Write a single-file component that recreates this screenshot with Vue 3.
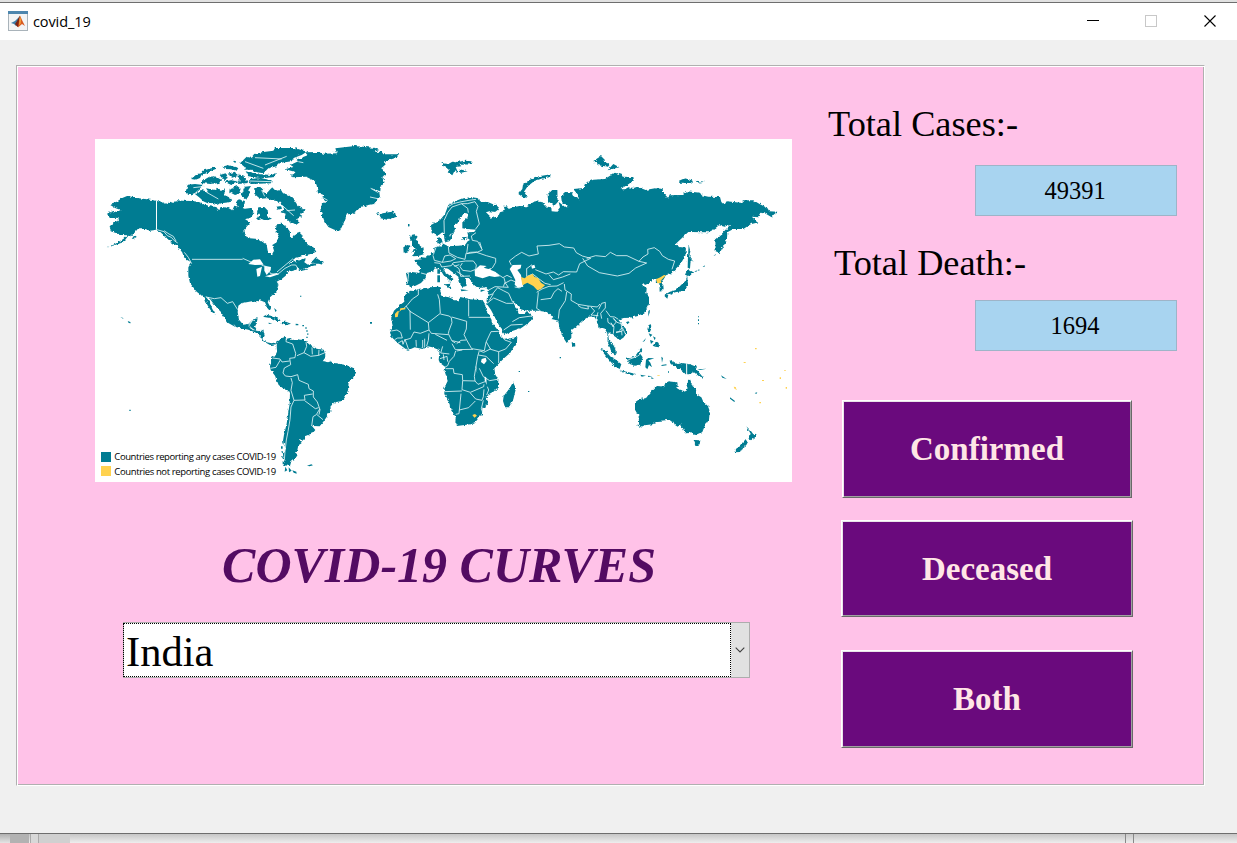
<script setup>
import { ref } from 'vue'

const country = ref('India')
const totals = [
  { label: 'Total Cases:-', value: '49391', cls: 'cases' },
  { label: 'Total Death:-', value: '1694', cls: 'death' },
]
const actions = ['Confirmed', 'Deceased', 'Both']
</script>

<template>
  <div class="desktop">
    <div class="window">
      <header class="titlebar">
        <svg class="appicon" width="20" height="20" viewBox="0 0 20 20">
          <rect x=".5" y=".5" width="19" height="19" fill="#f3f4f5" stroke="#a9b3ba" />
          <rect x="0" y="0" width="20" height="3" fill="#4d86ae" />
          <path d="M3 12 7 10 9 8 12 5 10 13 8 15 6 13Z" fill="#3d7ea9" />
          <path d="M7 13 9 10 12 4.500 11 15 9.500 16Z" fill="#7c2415" />
          <path d="M12 4.500 14 9 17 15 14 13 10 16.500 11 10Z" fill="#d95a20" />
          <path d="M12 5 13 9 12.500 13 11 14Z" fill="#f2a33a" />
        </svg>
        <span class="caption">covid_19</span>
        <svg class="controls" width="130" height="14" viewBox="0 0 130 14" shape-rendering="crispEdges">
          <path d="M0 6.500H12" stroke="#000" />
          <rect x="58.500" y="1.500" width="11" height="11" fill="none" stroke="#c8c8c8" />
          <path d="M117.500 1.500 128.500 12.500M128.500 1.500 117.500 12.500" stroke="#000" stroke-width="1.100" shape-rendering="auto" />
        </svg>
      </header>

      <main class="client">
        <section class="panel">
          <div class="left">
            <svg class="map" width="697" height="343" viewBox="0 0 697 343">
              <defs>
                <filter id="coast" x="-2%" y="-2%" width="104%" height="104%" color-interpolation-filters="sRGB">
                  <feTurbulence type="fractalNoise" baseFrequency=".11" numOctaves="2" seed="4" result="n" />
                  <feDisplacementMap in="SourceGraphic" in2="n" scale="10" xChannelSelector="R" yChannelSelector="G" />
                </filter>
              </defs>
              <rect width="697" height="343" fill="#fff" />

              <!-- North America -->
              <g transform="scale(.33333)">
                <g class="rough">
                <path class="land" d="M35 327 60 315 85 300 97 289 80 288 65 283 47 277 44 262 60 248 72 245 70 236 45 238 36 224 55 216 65 219 77 213 62 208 42 196 65 188 80 178 98 170 120 176 150 180 185 185 200 188 215 195 225 188 235 192 242 184 262 185 290 186 310 188 325 195 345 202 365 205 372 217 377 203 400 207 412 214 418 200 435 205 450 209 467 207 478 222 465 238 450 241 466 250 445 275 450 290 465 298 490 300 515 317 518 335 530 348 537 335 532 318 545 310 551 290 542 275 545 256 560 254 575 264 585 278 585 290 595 295 603 283 615 278 622 292 628 305 640 318 655 325 664 338 650 344 625 350 600 358 578 378 600 366 620 362 632 357 628 370 640 378 655 372 665 378 640 384 615 393 608 388 595 395 580 398 572 410 560 420 545 428 552 437 550 450 542 460 525 475 518 490 528 508 524 515 517 507 510 490 495 484 486 490 470 487 455 490 440 492 430 500 428 520 432 542 445 557 460 555 470 545 473 541 488 538 485 552 480 563 488 577 505 574 509 590 503 600 515 610 530 613 546 609 545 616 525 618 505 607 495 590 480 580 460 572 435 567 420 563 400 552 388 535 375 515 360 500 345 480 332 472 345 490 352 510 362 527 350 518 337 498 330 480 318 468 305 458 297 448 285 432 280 410 280 385 288 372 280 360 265 350 263 342 258 335 248 320 230 312 224 302 212 297 205 287 195 278 180 273 165 275 145 268 130 268 120 280 108 292 100 290 85 310 60 318Z" />
                <path class="land" d="M650 368 664 353 668 360 681 367 683 377 672 374 660 374ZM110 298l12-8 3 4-11 6ZM610 392l25-3 6 2-27 6ZM261 340l18 15 9 14-13-7Z" />
                <!-- Arctic islands -->
                <path class="land" d="M278 137 300 135 325 138 313 150 300 162 284 168 272 159ZM300 165 318 153 340 158 333 148 360 153 365 146 378 156 390 148 388 168 412 179 403 190 378 193 370 198 355 192 338 193 325 187 315 177ZM288 120 306 105 320 102 327 94 360 85 362 90 348 96 340 101 320 107 315 117 302 122ZM325 124 343 113 360 112 381 124 372 132 347 135 318 132ZM382 83 400 78 430 87 425 95 407 91 390 90ZM398 104 420 98 428 111 411 116ZM374 108l18-5 6 14-12 7ZM388 128l22-5 21 6-22 9ZM404 149l23-8 10 8-5 15-12 4-17-9ZM435 73 455 53 470 57 480 45 500 40 535 35 540 27 600 27 635 38 620 48 596 57 590 67 555 72 545 82 520 88 505 103 486 100 472 92 455 93 448 83ZM452 96 486 105 530 108 542 102 540 114 500 118 460 112ZM463 120 495 117 530 124 528 133 468 135 460 130ZM431 107 445 109 459 132 430 135ZM450 143 468 141 460 154 464 166 453 183 438 171ZM414 66l9-1-2 8ZM478 150 490 143 505 149 500 158 515 163 530 146 548 155 558 153 564 163 580 167 595 180 605 194 607 201 632 214 614 225 622 231 606 240 614 250 604 257 581 245 568 240 572 224 560 220 567 208 554 188 529 184 518 178 495 179 478 164ZM490 205 508 204 519 215 515 231 531 239 515 244 500 237 484 243 494 229 486 220ZM544 203l14-2 3 8-12 3ZM432 181l18 5-3 18-15 4-12-19Z" />
                </g>
                <path class="water" d="M460 375 475 362 495 361 506 377 480 378ZM484 390 501 383 495 411 487 413ZM508 380 528 384 527 394 515 408 508 395ZM510 412 545 402 552 406 525 415Z" />
                <path class="edge" d="M184.500 185V271" />
                <path class="fine" d="M291 361H443M443 358 468 369M500 379 515 383 527 404 548 406 570 388 590 378 602 378 610 390M333 474 358 479 378 476 397 493 413 488 428 512M182 271 207 278 217 290 229 295 238 305 248 312M546 399 570 379 593 360 604 370M550 430v15M462 556l10-11M207 275 222 285 235 292 243 306M268 340 280 355 290 374" />
                <path class="fine" d="M295 146 330 142M335 160 370 180M450 68 505 88M480 56 560 60M510 78 575 52M463 126 530 128M560 198 596 230M410 123 438 126M575 215 600 213M500 153 509 172" />
              </g>

              <!-- Greenland, Iceland -->
              <g transform="translate(145 0) scale(.33333)">
                <path class="land rough" d="M135 91 160 84 152 77 175 67 168 62 203 49 195 40 240 39 250 44 291 43 286 28 345 21 400 26 418 33 400 39 425 38 430 46 479 46 469 56 436 66 435 78 424 88 431 94 438 108 427 116 434 130 422 144 421 157 392 147 418 161 420 173 412 181 402 195 362 203 348 219 320 227 312 250 300 275 283 272 265 264 253 246 241 213 246 195 259 188 245 178 250 169 234 163 230 139 224 126 198 113 158 115 153 107 170 100ZM407 222 418 219 417 229 428 223 455 218 466 223 468 234 444 243 419 237 424 232Z" />
                <path class="land" d="M504 256h4v6h-4ZM102 507l8 7-3 6ZM119 517l7 7ZM128 530l5 5ZM180 470h4v3h-4Z" />
                <path class="fine" d="M245 174 263 184M392 148 415 161M390 174 413 179M175 68 190 71M424 88 435 87M290 41 276 37" />
              </g>

              <!-- Europe and Asia -->
              <g transform="translate(285 0) scale(.33333)">
                <g class="rough">
                <path class="land" d="M78 402 96 399 118 402 121 385 113 378 103 363 122 361 124 355 137 356 150 346 162 338 163 326 175 322 190 323 187 313 205 322 218 321 235 320 255 318 263 307 270 303 263 298 247 302 246 295 265 293 262 280 282 279 289 272 260 270 247 268 247 250 262 236 266 224 255 222 240 235 237 247 228 253 222 262 225 272 215 287 216 296 208 307 198 309 193 300 192 285 187 280 172 291 155 282 153 258 180 243 195 225 205 198 225 187 248 178 275 175 297 178 300 187 325 190 350 200 357 212 348 219 328 217 318 220 332 233 330 240 343 235 354 233 360 220 375 215 371 201 380 199 386 210 400 205 418 201 440 202 465 187 488 190 500 203 514 205 515 217 530 218 540 205 536 189 543 194 556 205 568 204 552 192 545 185 543 170 555 159 575 160 581 172 596 181 595 168 585 157 580 150 612 147 615 133 640 122 675 120 690 110 705 101 725 107 728 113 760 114 762 124 742 138 720 151 735 151 745 145 761 147 772 143 797 153 825 148 848 150 850 162 864 176 870 169 905 168 920 157 960 161 965 169 985 173 1020 174 1024 189 1033 198 1040 187 1088 192 1088 184 1120 184 1140 196 1162 207 1168 217 1192 218 1180 228 1175 235 1160 226 1144 221 1137 235 1115 233 1136 250 1112 256 1090 270 1060 270 1042 280 1041 299 1034 315 1019 342 1004 335 1003 303 1025 285 1042 266 1054 254 1034 263 1017 259 1000 272 985 280 925 279 886 316 898 324 918 326 916 350 902 374 875 402 861 405 843 433 850 438 851 453 839 455 838 433 827 430 830 419 815 423 808 432 795 438 788 430 799 423 786 437 800 447 799 462 807 471 807 495 794 520 774 531 750 536 731 537 715 542 725 555 738 570 738 585 730 596 719 603 708 592 690 580 684 586 687 604 700 618 707 631 707 648 696 639 683 610 682 582 673 568 656 568 650 545 642 532 625 533 605 547 588 563 574 574 574 597 560 612 549 595 538 565 535 545 515 540 520 533 500 519 475 515 440 515 421 511 413 499 397 487 411 511 418 525 434 525 442 518 457 532 459 538 445 552 425 566 395 577 372 588 366 570 357 559 333 513 319 493 321 475 327 452 319 444 302 447 280 439 276 427 266 419 275 414 262 417 257 423 260 441 246 443 236 429 235 413 220 401 204 389 192 386 190 396 213 412 222 422 218 419 210 433 209 423 191 409 180 391 165 387 158 398 141 401 137 417 123 432 105 441 95 444 78 439 82 424Z" />
                <path class="land" d="M93 288 104 286 113 293 107 302 115 307 120 320 132 329 128 339 133 345 115 351 95 352 105 341 97 337 108 330 96 320 96 307 89 299ZM70 325 82 318 92 321 84 329 87 336 71 341ZM195 436 212 434 210 448 195 441ZM171 297l12-3 5 16-7 7-9-4Z" />
                <path class="land" d="M184 72 205 75 217 68 235 71 244 82 227 84 232 96 222 99 217 109 203 100 209 91 192 83ZM227 70 250 65 278 67 275 76 247 77ZM239 91l24 6-22 5ZM415 165 427 150 429 137 447 124 465 114 512 106 511 114 482 120 463 126 443 142 432 158 440 171 447 176 429 175ZM503 165 517 153 532 153 533 189 523 200 504 187ZM640 66 663 51 675 63 672 68 690 76 684 83 655 79ZM683 94l17-19 18 10ZM897 125 914 118 941 125 932 132 900 131ZM947 125l28 3-23 3Z" />
                <path class="land" d="M926 317 931 337 928 353 941 369 932 363 930 389 923 386 924 353ZM915 407 923 390 943 401 924 411ZM922 411 924 440 912 455 886 460 868 465 854 467 870 458 888 453 904 437 916 426Z" />
                </g>
                <path class="land" d="M172 391h8v13h-8ZM172 409h8v21h-8ZM242 451l24 3-22 3ZM302 452l14 1-14 6ZM84 255h4v7h-4ZM855 465l10 2-3 12-8-7ZM869 465l10-5-3 7ZM805 516l5-4-4 20ZM1000 352l7-7v3ZM943 398l7-4v4ZM952 394l6-3v4ZM968 384l6-5v4ZM740 548l9 1-6 6Z" />
                <path class="water" d="M285 411 284 393 300 379 320 381 311 386 325 390 337 386 331 392 347 399 360 412 344 414 328 411 308 418ZM389 390 398 378 424 377 422 388 412 393 423 408 424 415 427 429 430 443 414 446 404 437 406 423 396 403ZM454 380 463 377 466 386 456 389ZM208 289l6-6-4 11Z" />
                <path class="fine" d="M193 285 192 245 203 221 216 204 245 194 262 194 285 188 294 202 289 217 298 255 287 270M244 194 263 208 265 221M206 202 220 194 240 189 267 184 288 181M288 281 274 291 277 304 293 307 307 333 293 339 271 340 260 344 264 315M299 309 305 328M260 344 290 340 319 350 347 358 347 370 337 387M205 322 207 342 232 355 255 361 258 343M160 347 168 325M159 349 163 364 187 370 194 351 210 348 227 359 213 366 187 370M163 371 180 373 185 384 214 380 220 371 257 366 280 366 289 378 287 391 272 397 248 394 240 383 247 372M216 374 237 389 242 412 270 411M223 382 238 377M230 397 252 412M123 402 142 407M86 405 82 434M351 404 369 416 381 409 395 416M372 417 376 432 393 423 405 428M376 432 385 445 345 443 323 455M370 443 375 430M339 463 353 446 370 455 386 463 398 490M320 471 340 464 328 484M321 493 341 477 379 493 399 493M397 548 418 536 455 531M371 573 393 558 428 556M404 444 419 447 434 432M388 366 407 351 425 340 447 351 475 345 471 321 507 319 538 314 553 324 581 327 589 341 607 351 632 358M388 366 394 379M440 388 440 413 458 405 476 419 495 433 512 437M440 389 456 377M466 392 498 405 520 399 536 408 550 398 590 399 599 374 632 358M507 407 520 422 548 414 571 405M475 460 470 508 482 516M470 460 486 450 507 442 531 441 551 431M482 482 513 478 522 460 534 449 546 457M553 435 555 453 574 465 573 484 594 496 624 501 652 504 660 495M535 539 538 513 556 485 560 459M594 499 604 506 625 510 624 501M633 504 644 516 633 528 655 530M656 511 665 493 676 490 676 507 662 523 665 539M678 515 691 533 704 534 715 541M683 537 684 550 702 562 700 584M700 537 711 550 723 554 727 576 708 579M608 358 623 381 658 401 712 411 747 403 767 387 800 372 777 367 741 350 710 350 691 340 676 353 647 350 620 358M777 367 789 354 804 345 803 331 823 326 839 337 847 350 865 361 884 366 876 391M647 545 654 520" />
                <path class="yellow" d="M423 414 434 418 442 411 458 405 463 413 475 418 483 431 495 439 482 451 472 454 460 441 442 431 427 439ZM828 421 841 415 852 408 858 409 842 425 845 432 832 433Z" />
              </g>

              <!-- Africa -->
              <g transform="translate(280 141) scale(.33333)">
                <path class="land rough" d="M105 32 117 33 130 27 165 22 192 20 198 36 193 42 202 49 222 52 240 61 252 61 256 51 285 58 323 61 330 72 333 90 345 107 351 128 361 141 371 154 375 165 388 179 427 171 426 184 406 218 388 234 371 251 358 265 361 284 370 298 369 322 349 341 335 349 339 374 322 386 321 401 302 425 286 433 246 438 241 427 242 411 226 387 222 367 208 339 208 323 218 303 209 274 211 261 195 249 191 240 194 211 172 202 158 199 142 207 119 202 101 210 91 206 69 190 52 173 45 158 50 147 53 137 48 115 57 92 76 74 88 65 87 48ZM386 348 404 325 414 307 423 325 415 358 404 382 390 382 384 363ZM590 187 600 188 601 199 592 202Z" />
                <path class="land" d="M167 232h4v4h-4ZM431 273h4v3h-4ZM459 333h4v3h-4ZM554 231h4v4h-4ZM391 303l8 5Z" />
                <path class="water" d="M320 237 332 233 335 243 327 253 318 246ZM329 289l5 4 1 22-6-14ZM303 257l4 24-5-20Z" />
                <path class="fine" d="M130 29 130 45 112 57 98 74 88 84M105 92 106 149M93 78 105 94 160 128 196 100 193 59 188 43M281 59V109M281 112H345M196 102 222 108 229 113 231 128 222 152 220 161 231 183 241 189M160 128 162 150 136 160 117 156 107 175 90 180M230 111 275 124 274 147 267 164 275 180M162 150 169 160 220 164M49 153 66 150 77 157 82 174 68 174 59 179M68 190 82 182 84 193 90 178 95 192 101 209M123 180 124 200M143 180V204M149 176V202M162 160 160 181 155 198M275 180 290 206 328 212 333 187 348 155 371 154M334 186 347 208 371 215 392 207 409 187 389 180M371 215V249M348 206 326 217 315 213M245 191 258 181 273 180M203 199 197 219 223 222M231 191 241 209 294 208M242 213 237 229 223 244 218 257 211 261M195 236 216 229 218 245M205 223 207 240M212 266 235 266 237 280 262 284 263 302 300 303 298 289 302 265 308 229 313 212M310 225 333 229 356 251M313 265 325 290 344 302 367 298M300 303 309 313 330 305M263 303 261 329 286 337 326 320 327 313M208 335 261 333M286 339 302 357 321 361 325 350 327 328M258 341 252 401 242 403M253 390 281 383 301 363M325 361 319 386 323 397M337 320 341 330 335 345M232 182 256 188M181 163 216 181M245 213 262 210" />
                <path class="yellow" d="M60 112 60 102 67 94 74 94 76 85 91 83 91 88 79 90 71 97 68 111ZM292 405 300 402 306 407 298 413Z" />
              </g>

              <!-- South America and Caribbean -->
              <g transform="translate(0 171) scale(.33333)">
                <path class="land rough" d="M545 103 549 94 563 83 574 80 573 87 584 84 591 90 608 88 632 91 641 102 650 108 668 116 686 119 691 132 690 144 683 154 704 151 713 158 740 163 755 166 777 175 783 188 775 202 761 217 759 241 751 260 742 273 724 276 707 288 706 305 685 335 674 349 652 348 649 340 651 348 661 360 653 370 631 378 629 389 613 388 620 400 610 406 607 421 599 430 608 434 598 451 589 454 585 468 568 466 568 452 564 437 572 416 564 392 567 374 575 341 580 307 584 281 585 246 567 237 551 225 540 197 527 180 525 169 532 143 540 139 546 125ZM505 19 515 14 530 18 547 25 557 31 548 34 530 25 507 21ZM559 36 573 35 588 41 572 46 561 42Z" />
                <path class="land" d="M520 38l12 2-10 2ZM602 41l8 1v4h-8ZM76 22l7 1 3 4ZM90 26l7 2ZM98 33l8 3 1 4-6-1ZM103 299h4v4h-4ZM636 467l13-4 5 3-10 3ZM825 36h6v5h-6ZM571 470l6 11-8 4ZM581 472l9 10-8 5ZM592 481l12 4 1 6-9-3ZM622 45h5v4h-5ZM631 52h4v4h-4ZM634 61h4v4h-4ZM637 70h3v5h-3ZM634 80h4v4h-4ZM561 396l5 1-1 8ZM558 409h5v7h-5ZM558 425l5-2 2 8ZM558 438l5 1 1 8ZM563 453l4 4v6h-4Z" />
                <path class="water" d="M685 153 698 145 708 154 699 157Z" />
                <path class="fine" d="M574 83 573 95 593 102 602 130 600 143 584 145 587 164 568 174 564 189 571 198 588 200 608 194 612 211 640 223 642 236 655 243 655 261 667 276 675 299 672 314M606 137 627 128 635 109 633 96M627 128 647 139 671 136 690 128M651 112 652 133M672 119 671 136M532 144 555 147 561 156 584 153M527 175 543 172 556 150M588 204 592 218 588 241 597 271 630 270 628 256 653 252M597 271 588 291 585 329 579 365 574 390 570 425 568 450M629 272 661 296 671 293M674 297 664 314 654 320 650 348M666 314 684 329M461 49 473 30 480 32M464 53 479 60M482 61 506 59M465 49l9 12" />
              </g>

              <!-- Oceania -->
              <g transform="translate(485 141) scale(.33333)">
                <path class="land rough" d="M165 367 178 358 199 353 209 340 221 326 231 318 241 319 251 322 256 309 267 304 292 307 293 316 289 323 309 336 318 333 323 320 324 299 331 300 338 319 347 325 351 344 364 352 370 365 386 380 389 397 387 419 374 439 367 456 346 465 332 459 315 460 309 445 301 440 303 430 293 440 285 435 280 425 266 420 233 423 218 433 194 436 182 442 172 436 177 428 176 409 165 389ZM341 480 361 481 359 493 347 497ZM499 439 513 453 520 463 530 461 524 473 513 481 505 475 512 461ZM497 481 505 484 499 495 485 506 480 516 465 517 463 510 481 498ZM61 207 75 211 92 230 110 241 124 253 119 267 103 258 88 241ZM138 231 147 235 164 231 172 219 184 203 187 211 179 219 188 232 181 254 165 257 149 252ZM90 205l14 9 4 12-11-5ZM118 271 143 276 168 282 161 287 136 280ZM265 242 278 240 283 250 294 252 307 249 330 253 345 259 351 270 370 293 356 288 342 277 327 283 317 283 307 272 291 264 284 258 275 254ZM206 135 213 133 214 146 208 160 202 147ZM229 184l7 5 1 13-11-2-8-3Z" />
                <path class="land" d="M181 284l17 3-13 3ZM204 287l13 2-13 2ZM213 292l9 3-7 2ZM198 239 205 234 223 235 205 241 211 248 216 262 207 255 202 268 196 262ZM244 230l5 4-3 14ZM244 255l15-2 1 3-15 2ZM206 160l11 4-6 7ZM219 169l8 4-3 8ZM210 180l11 4-8 8ZM187 187l11-13-4 9ZM119 163l8-3ZM352 268l28-2-20 4ZM385 265l4-3ZM402 272l10 6ZM423 286l17 11-13-4ZM450 352l15 11-2 3-13-10ZM524 339l8-2-3 5ZM532 332l7-3ZM354 109h3v3h-3ZM354 118h3v5h-3ZM354 129h3v4h-3ZM264 274h3v4h-3ZM138 127l9-3-4 9ZM206 97l3-3-4 17ZM84 183l5 3 6 19-6-4Z" />
                <path class="edge" d="M320 250V286" />
                <path class="fine" d="M118 151 127 143 137 163M100 116 109 126 97 140M145 239 172 229 184 220M108 158 125 154 126 166M93 128 101 141" />
                <path class="yellow" d="M525 204h5v4h-5ZM491 246h6v3h-6ZM546 300h6v3h-6ZM599 292h4v5h-4ZM613 270h4v3h-4ZM617 321h4v5h-4ZM461 320l6 1 2 5-5 1ZM538 366h5v4h-5ZM232 286h7v2h-7ZM467 327h3v2h-3Z" />
              </g>

              <rect x="6" y="313" width="10" height="10" fill="#007c92" />
              <rect x="6" y="327" width="10" height="10" fill="#ffd24f" />
              <text class="key" x="19.300" y="321" textLength="162">Countries reporting any cases COVID-19</text>
              <text class="key" x="19.300" y="335.500" textLength="162">Countries not reporting cases COVID-19</text>
            </svg>

            <h1 class="heading">COVID-19 CURVES</h1>

            <div class="combo">
              <div class="value">{{ country }}</div>
              <div class="drop">
                <svg width="10" height="6" viewBox="0 0 10 6"><path d="M.7.7 5 5 9.300.7" fill="none" stroke="#404040" stroke-width="1.100" /></svg>
              </div>
            </div>
          </div>

          <div class="right">
            <div v-for="t in totals" :key="t.label" class="total" :class="t.cls">
              <div class="label">{{ t.label }}</div>
              <div class="field">{{ t.value }}</div>
            </div>
            <button v-for="a in actions" :key="a" class="action" :class="a.toLowerCase()">{{ a }}</button>
          </div>
        </section>
      </main>
    </div>
    <div class="behind"><i class="b1"></i><i class="b2"></i><i class="b3"></i><i class="b4"></i><i class="b5"></i></div>
  </div>
</template>

<style>
body { margin: 0; overflow: hidden; }
</style>

<style scoped>
* { box-sizing: border-box; }
.desktop { width: 1237px; height: 843px; background: #e1e1e1; padding-top: 2px; overflow: hidden; }
.window { height: 832px; border-top: 1px solid #6e6e6e; border-bottom: 1px solid #6e6e6e; background: #f0f0f0; }
.titlebar { height: 37px; background: #fff; display: flex; align-items: center; padding: 0 20px 0 8px; }
.appicon { flex: none; margin-top: -1px; }
.caption { font: 14.500px/20px "Open Sans", "Noto Sans", sans-serif; letter-spacing: -.1px; color: #000; margin-left: 5px; flex: 1; }
.controls { flex: none; margin-top: -2px; }
.client { padding: 25px 0 0 16px; }
.panel {
  width: 1189px; height: 721px; display: flex; background: #ffc2e8;
  border: 1px solid; border-color: #b0b0b0 #fff #fff #b0b0b0;
  box-shadow: inset 1px 1px #fff, inset -1px -1px #b0b0b0;
  font-family: "Liberation Serif", "Times New Roman", serif;
}
.left { width: 775px; padding: 73px 0 0 78px; }
.map { display: block; }
.land { fill: #007c92; }
.rough { filter: url(#coast); }
.water { fill: #fff; }
.edge { fill: none; stroke: #fff; stroke-width: 3; }
.fine { fill: none; stroke: #e5f6f8; stroke-width: 2.500; }
.yellow { fill: #ffd24f; }
.key { font: 9.500px "Open Sans", "Noto Sans", sans-serif; fill: #000; }
.heading { margin: 54px 0 0; width: 688px; text-align: center; font-size: 50px; line-height: 58px; font-weight: bold; font-style: italic; color: #530b62; }
.combo { display: flex; width: 627px; height: 56px; margin: 28px 0 0 28px; border: 1px solid #adadad; background: #fff; }
.value { flex: 1; border: 1px dotted #000; margin-left: -1px; padding-left: 2px; font-size: 42.500px; line-height: 55px; color: #000; }
.drop { width: 18px; background: #e1e1e1; display: flex; align-items: center; justify-content: center; padding-right: 1px; }
.right { flex: 1; padding: 37px 0 0 36px; }
.total { color: #000; }
.label { font-size: 36.300px; line-height: 42px; white-space: nowrap; }
.field { width: 202px; height: 51px; margin: 20px 0 0 147px; background: #a8d4f0; border: 1px solid #9eb4c8; font-size: 24.500px; line-height: 50px; text-align: center; padding-right: 2px; }
.death { margin-top: 26px; }
.death .label { padding-left: 6px; }
.death .field { margin-top: 16px; }
.action {
  display: block; width: 292px; height: 97px; margin-left: 13px; padding: 0; border-radius: 0;
  background: #6a0a7d; color: #ffe6e6; font: bold 33px "Liberation Serif", "Times New Roman", serif;
  font-variant-ligatures: none;
  border: 1px solid; border-color: #fff #696969 #696969 #fff;
  box-shadow: inset 1px 1px #e9e3e9, inset -1px -1px #a0a0a0;
}
.confirmed { width: 290px; height: 98px; margin: 49px 0 0 14px; }
.deceased { margin-top: 22px; padding-top: 1px; }
.both { height: 98px; margin-top: 33px; }
.behind { height: 9px; display: flex; background: linear-gradient(#c6c6c6, #eeeeee); }
.behind i { display: block; height: 9px; }
.b1 { width: 10px; background: linear-gradient(#b0b0b0, #e4e4e4); }
.b2 { width: 19px; background: #b2b2b2; }
.b3 { width: 9px; border: solid #aaa; border-width: 0 1px; background: #d8d8d8; margin-left: 1px; }
.b4 { width: 31px; background: #d0d0d0; }
.b5 { width: 9px; margin-left: 1055px; border: solid #888; border-width: 0 1px; }
</style>
